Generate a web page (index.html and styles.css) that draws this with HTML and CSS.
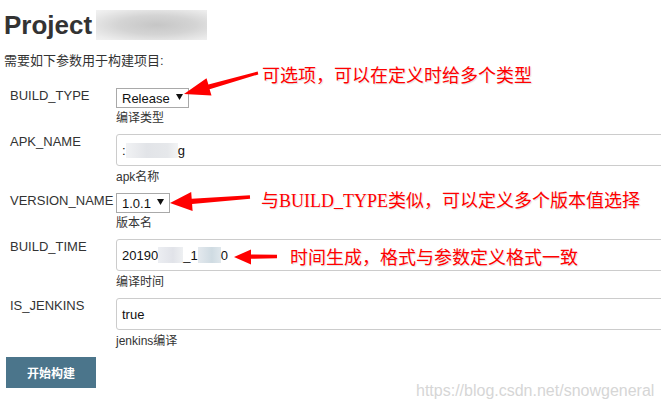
FILE: index.html
```html
<!DOCTYPE html>
<html lang="zh-CN">
<head>
<meta charset="utf-8">
<title>Project - 构建参数</title>
<link rel="stylesheet" href="styles.css">
</head>
<body>
<div class="page">
  <h1 class="title"><span>Project</span><span class="blur blur-title"></span></h1>
  <p class="intro">需要如下参数用于构建项目:</p>
  <div class="params">
    <div class="param">
      <div class="label">BUILD_TYPE</div>
      <div class="field">
        <div class="select"><span>Release</span><svg class="caret" width="7" height="6" viewBox="0 0 7 6"><polygon points="0,0 7,0 3.5,6"/></svg></div>
        <div class="desc desc-select">编译类型</div>
      </div>
    </div>
    <div class="param">
      <div class="label">APK_NAME</div>
      <div class="field">
        <div class="input"><span>:</span><span class="blur blur-apk"></span><span>g</span></div>
        <div class="desc">apk名称</div>
      </div>
    </div>
    <div class="param">
      <div class="label">VERSION_NAME</div>
      <div class="field">
        <div class="select"><span>1.0.1</span><svg class="caret" width="7" height="6" viewBox="0 0 7 6"><polygon points="0,0 7,0 3.5,6"/></svg></div>
        <div class="desc desc-select">版本名</div>
      </div>
    </div>
    <div class="param">
      <div class="label">BUILD_TIME</div>
      <div class="field">
        <div class="input"><span>20190</span><span class="blur blur-time1"></span><span>_1</span><span class="blur blur-time2"></span><span>0</span></div>
        <div class="desc">编译时间</div>
      </div>
    </div>
    <div class="param">
      <div class="label">IS_JENKINS</div>
      <div class="field">
        <div class="input"><span>true</span></div>
        <div class="desc">jenkins编译</div>
      </div>
    </div>
  </div>
  <button class="build" type="button">开始构建</button>
</div>

<svg class="arrows" width="661" height="410" viewBox="0 0 661 410">
  <polygon points="184,94 211.5,95.6 209.6,89.2 258.3,74.4 257.7,71.6 208.4,84.6 206.5,78.2"/>
  <polygon points="170,203 192.6,211 192.1,204 250.1,198.7 249.9,195.3 191.7,198.7 191.2,192"/>
  <polygon points="234,257 251,264.5 251,258.8 277,258.2 277,254.8 251,254.4 251,249.5"/>
</svg>
<div class="note note-1">可选项，可以在定义时给多个类型</div>
<div class="note note-2">与<span class="serif">BUILD_TYPE</span>类似，可以定义多个版本值选择</div>
<div class="note note-3">时间生成，格式与参数定义格式一致</div>
<div class="watermark">https://blog.csdn.net/snowgeneral</div>
</body>
</html>
```

FILE: styles.css
```css
html, body {
  margin: 0;
  padding: 0;
  overflow: hidden;
  background: #fff;
}

body {
  position: relative;
  width: 661px;
  height: 410px;
  font-family: "Liberation Sans", "Noto Sans CJK SC", sans-serif;
  color: #333;
}

.page {
  padding: 10px 0 0 4px;
}

.title {
  display: flex;
  align-items: center;
  margin: 0;
  height: 30px;
  font-size: 26px;
  line-height: 30px;
  font-weight: bold;
  color: #333;
}

.blur {
  display: inline-block;
}

.blur-title {
  width: 111px;
  height: 30px;
  margin-left: 4px;
  background: radial-gradient(ellipse at 55% 50%, #c6c6c6 0%, #d4d4d4 45%, #ececec 85%, #f2f2f2 100%);
}

.intro {
  margin: 12px 0 0 0;
  font-size: 13px;
  line-height: 18px;
}

.params {
  margin-top: 18px;
  padding-left: 6px;
}

.param {
  display: grid;
  grid-template-columns: 106px 560px;
  margin-bottom: 7px;
}

.label {
  font-size: 13px;
  line-height: 16px;
  color: #333;
}

.field {
  display: flex;
  flex-direction: column;
  align-items: flex-start;
}

.select {
  display: flex;
  align-items: center;
  gap: 6px;
  height: 20px;
  box-sizing: border-box;
  padding: 0 5px;
  border: 1px solid #a9a9a9;
  font-size: 13px;
  color: #111;
  background: #fff;
}

.caret {
  display: block;
  margin-bottom: 2px;
  fill: #111;
}

.input {
  display: flex;
  align-items: center;
  width: 100%;
  height: 32px;
  box-sizing: border-box;
  padding: 0 5px;
  border: 1px solid #ccc;
  border-radius: 3px;
  font-size: 13px;
  color: #111;
  background: #fff;
}

.blur-apk {
  width: 52px;
  height: 15px;
  background: linear-gradient(90deg, #f1f2f4 0%, #e2e4e8 40%, #e6e8eb 80%, #f3f4f5 100%);
}

.blur-time1 {
  width: 25px;
  height: 16px;
  background: linear-gradient(90deg, #eceef2 0%, #e1e3e9 60%, #eef0f2 100%);
}

.blur-time2 {
  width: 23px;
  height: 16px;
  background: linear-gradient(90deg, #e4e9ee 0%, #cfdbe2 60%, #dfe7ec 100%);
}

.desc {
  margin-top: 2px;
  font-size: 12px;
  line-height: 18px;
  color: #333;
}

.desc-select {
  margin-top: 1px;
}

.build {
  display: block;
  margin: 0 0 0 2px;
  width: 90px;
  height: 31px;
  padding: 0;
  border: none;
  background: #4b758b;
  color: #fff;
  font-family: "Noto Sans CJK SC", sans-serif;
  font-size: 12px;
  font-weight: bold;
}

.arrows {
  position: absolute;
  top: 0;
  left: 0;
  fill: #f00;
  pointer-events: none;
}

.note {
  position: absolute;
  font-family: "Noto Sans CJK SC", sans-serif;
  font-size: 18px;
  line-height: 24px;
  color: #f00;
  white-space: nowrap;
  text-shadow: 1px 1px 1px rgba(0, 0, 0, 0.12);
}

.serif {
  font-family: "Liberation Serif", serif;
}

.note-1 {
  top: 62px;
  left: 262px;
}

.note-2 {
  top: 187px;
  left: 261px;
}

.note-3 {
  top: 244px;
  left: 290px;
}

.watermark {
  position: absolute;
  top: 381px;
  left: 416px;
  font-size: 16px;
  line-height: 20px;
  color: #d6d6d6;
  white-space: nowrap;
}
```
